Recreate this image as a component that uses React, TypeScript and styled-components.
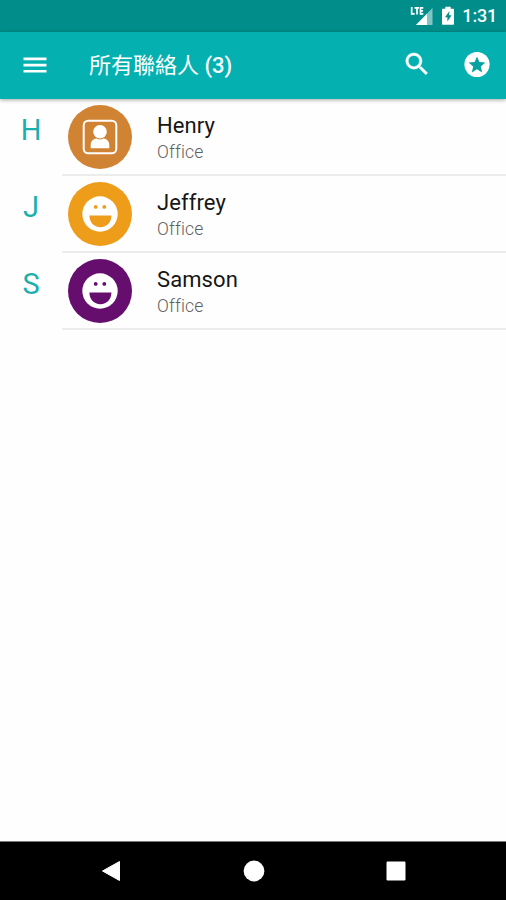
import React from "react";
import styled, { createGlobalStyle } from "styled-components";

const GlobalStyle = createGlobalStyle`
  * { box-sizing: border-box; }
  body { margin: 0; background: #fefefe; font-family: Roboto, "Noto Sans CJK TC", sans-serif; }
`;

const Screen = styled.div`
  display: flex;
  flex-direction: column;
  width: 506px;
  height: 900px;
  overflow: hidden;
`;

const StatusBar = styled.div`
  display: flex;
  align-items: center;
  justify-content: flex-end;
  gap: 7px;
  height: 32px;
  padding-right: 9px;
  background: #018e8a;
  color: #f4fdfc;
`;

const Clock = styled.span`
  font-size: 18px;
  font-weight: 500;
  line-height: 32px;
  letter-spacing: -0.2px;
`;

const AppBar = styled.header`
  display: flex;
  align-items: center;
  height: 67px;
  flex: none;
  padding: 0 16px 0 23px;
  background: #04b1b0;
  color: #fff;
  box-shadow: 0 1px 4px rgba(0, 0, 0, 0.35);
  z-index: 1;
`;

const Title = styled.h1`
  flex: 1;
  margin: -2px 0 0 42px;
  font-size: 22px;
  font-weight: 500;
  line-height: 30px;
`;

const CjkTitle = styled.span`
  font-family: "Noto Sans CJK TC", sans-serif;
  font-weight: 400;
`;

const Actions = styled.div`
  display: flex;
  align-items: center;
  gap: 32px;
`;

const Icon = styled.svg`
  display: block;
  flex: none;
`;

const List = styled.main`
  flex: 1;
`;

const Row = styled.div`
  display: flex;
  height: 77px;
`;

const Initial = styled.div`
  width: 62px;
  padding-top: 13px;
  text-align: center;
  color: #1cb0ad;
  font-size: 29px;
  font-weight: 400;
  line-height: 36px;
`;

const Contact = styled.div`
  display: flex;
  flex: 1;
  padding: 6px 0 0 6px;
  border-bottom: 2px solid #ececec;
`;

const Avatar = styled.div<{ $color: string }>`
  display: grid;
  place-items: center;
  width: 64px;
  height: 64px;
  border-radius: 50%;
  background: ${(p) => p.$color};
`;

const Details = styled.div`
  padding: 7px 0 0 25px;
`;

const Name = styled.div`
  color: #161616;
  font-size: 22px;
  line-height: 28px;
  letter-spacing: 0.1px;
`;

const Label = styled.div`
  color: #606060;
  font-size: 17.5px;
  font-weight: 300;
  line-height: 25px;
  letter-spacing: 0.15px;
`;

const NavBar = styled.nav`
  display: flex;
  align-items: center;
  justify-content: space-between;
  height: 59px;
  padding: 0 100px 0 101px;
  background: #000;
  border-top: 1px solid #777;
`;

const SignalIcon = () => (
  <Icon width="24" height="20" viewBox="0 0 24 20" fill="none">
    <path d="M22.5 2v17H6z" fill="#7fc6c3" />
    <path d="M17 7.700V19H6z" fill="#fff" />
    <path d="M0 0h14.500v10H0z" fill="#018e8a" />
    <path d="M1.700 1v6.800h3M4.500 1.800h4.500M7 1.800v6.700M13.300 1.800h-2.800v6h2.800M10.500 4.800h2.600" stroke="#fff" strokeWidth="1.700" />
  </Icon>
);

const BatteryIcon = () => (
  <Icon width="14" height="20" viewBox="0 0 14 20">
    <path d="M4.300 .7h5.400v2H12c.6 0 1 .4 1 1v14c0 .6-.4 1-1 1H2c-.6 0-1-.4-1-1v-14c0-.6.4-1 1-1h2.300z" fill="#fff" />
    <path d="M8.500 5 4 11.300h2.400v4.300l4.200-6.300H8z" fill="#018e8a" />
  </Icon>
);

const MenuIcon = () => (
  <Icon width="24" height="24" viewBox="0 0 24 24" fill="#fff">
    <path d="M.5 3.500h23v2.700H.5zM.5 9.700h23v2.700H.5zM.5 16h23v2.600H.5z" />
  </Icon>
);

const SearchIcon = () => (
  <Icon width="30" height="30" viewBox="0 0 24 24" fill="#fff" stroke="#fff" strokeWidth=".35">
    <path d="M15.500 12.500h-.79l-.28-.27A6.470 6.470 0 0 0 16 8 6.500 6.500 0 1 0 9.500 14.500c1.610 0 3.090-.59 4.230-1.570l.27.28v.79l5 4.990L20.490 17.500l-4.990-5zm-6 0a4.500 4.500 0 1 1 0-9 4.500 4.500 0 0 1 0 9z" />
  </Icon>
);

const FavoritesIcon = () => (
  <Icon width="26" height="28" viewBox="0 0 26 28">
    <circle cx="13" cy="12.500" r="12.600" fill="#fff" />
    <path d="m13 4.500 2.400 5.600 6 .5-4.600 3.900 1.400 6-5.200-3.200-5.200 3.200 1.400-6-4.600-3.900 6-.5z" fill="#04a3a1" />
  </Icon>
);

const PersonIcon = () => (
  <Icon width="36" height="36" viewBox="0 0 36 36">
    <rect x="1.700" y="1.700" width="32.600" height="32.600" rx="4.500" fill="none" stroke="#fff" strokeWidth="2" />
    <circle cx="18" cy="12.800" r="6.800" fill="#fff" />
    <path d="M8.700 29.300v-3c0-4.300 2.500-6.500 5.800-6.800 2 1.400 5 1.400 7 0 3.300.3 5.800 2.500 5.800 6.800v3z" fill="#fff" />
  </Icon>
);

const SmileIcon = ({ color }: { color: string }) => (
  <Icon width="36" height="36" viewBox="0 0 36 36">
    <circle cx="18" cy="18" r="17.700" fill="#fff" />
    <circle cx="13.700" cy="10.900" r="1.900" fill={color} />
    <circle cx="22.300" cy="10.900" r="1.900" fill={color} />
    <path d="M7.400 19.600h22c0 7-4.700 11.600-11 11.600s-11-4.600-11-11.600z" fill={color} />
  </Icon>
);

const contacts = [
  { initial: "H", name: "Henry", color: "#d18334", person: true },
  { initial: "J", name: "Jeffrey", color: "#ee9d1b", person: false },
  { initial: "S", name: "Samson", color: "#650e6e", person: false },
];

export default function App() {
  return (
    <Screen>
      <GlobalStyle />
      <StatusBar>
        <SignalIcon />
        <BatteryIcon />
        <Clock>1:31</Clock>
      </StatusBar>
      <AppBar>
        <MenuIcon />
        <Title>
          <CjkTitle>所有聯絡人</CjkTitle> (3)
        </Title>
        <Actions>
          <SearchIcon />
          <FavoritesIcon />
        </Actions>
      </AppBar>
      <List>
        {contacts.map((c) => (
          <Row key={c.name}>
            <Initial>{c.initial}</Initial>
            <Contact>
              <Avatar $color={c.color}>{c.person ? <PersonIcon /> : <SmileIcon color={c.color} />}</Avatar>
              <Details>
                <Name>{c.name}</Name>
                <Label>Office</Label>
              </Details>
            </Contact>
          </Row>
        ))}
      </List>
      <NavBar>
        <Icon width="20" height="22" viewBox="0 0 20 22">
          <path d="M18.500 1.500v19L1.500 11z" fill="#fff" stroke="#fff" strokeLinejoin="round" />
        </Icon>
        <Icon width="22" height="22" viewBox="0 0 22 22">
          <circle cx="11" cy="11" r="10.400" fill="#fff" />
        </Icon>
        <Icon width="20" height="20" viewBox="0 0 20 20">
          <rect x=".5" y=".5" width="19" height="19" rx="1.200" fill="#fff" />
        </Icon>
      </NavBar>
    </Screen>
  );
}
